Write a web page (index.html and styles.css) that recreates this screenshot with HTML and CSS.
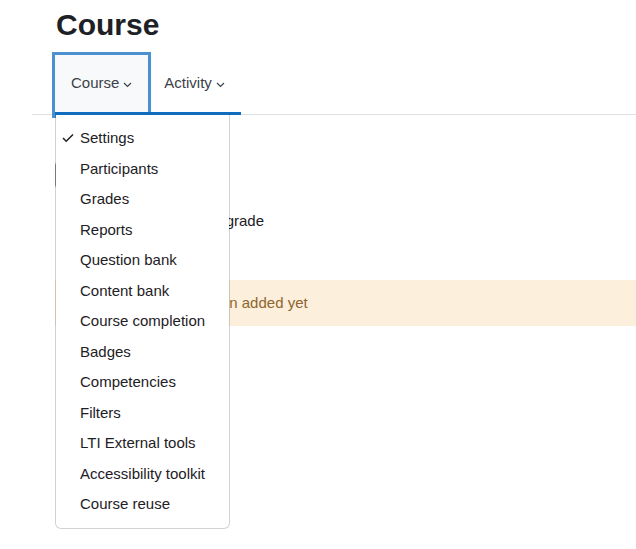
FILE: index.html
```html
<!DOCTYPE html>
<html lang="en">
<head>
<meta charset="utf-8">
<title>Course</title>
<link rel="stylesheet" href="styles.css">
</head>
<body>
<div class="page">
  <h2 class="page-title">Course</h2>
  <nav class="secnav">
    <ul class="tabs">
      <li class="tab tab-open">
        <a class="tab-link is-focused" href="#">Course<svg class="chev" width="9" height="6" viewBox="0 0 9 6"><polyline points="1,1 4.5,4.5 8,1" fill="none" stroke="currentColor" stroke-width="1.2"/></svg></a>
        <ul class="dropdown">
          <li class="dd-item"><span class="dd-icon"><svg width="12" height="10" viewBox="0 0 12 10"><polyline points="1,5 4.2,8.2 11,1.5" fill="none" stroke="#1d2125" stroke-width="1.5"/></svg></span>Settings</li>
          <li class="dd-item"><span class="dd-icon"></span>Participants</li>
          <li class="dd-item"><span class="dd-icon"></span>Grades</li>
          <li class="dd-item"><span class="dd-icon"></span>Reports</li>
          <li class="dd-item"><span class="dd-icon"></span>Question bank</li>
          <li class="dd-item"><span class="dd-icon"></span>Content bank</li>
          <li class="dd-item"><span class="dd-icon"></span>Course completion</li>
          <li class="dd-item"><span class="dd-icon"></span>Badges</li>
          <li class="dd-item"><span class="dd-icon"></span>Competencies</li>
          <li class="dd-item"><span class="dd-icon"></span>Filters</li>
          <li class="dd-item"><span class="dd-icon"></span>LTI External tools</li>
          <li class="dd-item"><span class="dd-icon"></span>Accessibility toolkit</li>
          <li class="dd-item"><span class="dd-icon"></span>Course reuse</li>
        </ul>
      </li>
      <li class="tab">
        <a class="tab-link" href="#">Activity<svg class="chev" width="9" height="6" viewBox="0 0 9 6"><polyline points="1,1 4.5,4.5 8,1" fill="none" stroke="currentColor" stroke-width="1.2"/></svg></a>
      </li>
    </ul>
  </nav>
  <section class="content">
    <div class="select-box">Grader report</div>
    <div class="grade-row"><span class="grade-text">Overall course grade</span></div>
    <div class="alert">No outcomes have been added yet</div>
  </section>
</div>
</body>
</html>
```

FILE: styles.css
```css
* { box-sizing: border-box; }
html, body { margin: 0; padding: 0; background: #fff; }
body {
  font-family: "Liberation Sans", Arial, sans-serif;
  color: #1d2125;
  font-size: 15px;
  line-height: 1.5;
}
.page {
  padding-left: 32px;
  min-height: 549px;
}
.page-title {
  margin: 7px 0 0 24px;
  font-size: 30px;
  line-height: 36px;
  font-weight: 700;
  color: #1d2125;
}
.secnav {
  margin-top: 12px;
  border-bottom: 1px solid #dee2e6;
  height: 60px;
}
.tabs {
  list-style: none;
  margin: 0 0 0 23px;
  padding: 0;
  display: flex;
  height: 60px;
}
.tab { position: relative; height: 60px; }
.tab-link {
  display: flex;
  align-items: center;
  height: 60px;
  padding: 0 16px;
  color: #3b4148;
  text-decoration: none;
  font-size: 15px;
  border-bottom: 3px solid #0f6cbf;
}
.is-focused {
  background: #f8f9fa;
  box-shadow: 0 0 0 3px rgba(15, 108, 191, 0.75);
  position: relative;
  z-index: 1;
}
.chev { margin-left: 4px; margin-top: 2px; }
.dropdown {
  position: absolute;
  top: 60px;
  left: 0;
  z-index: 5;
  width: 175px;
  margin: 0;
  padding: 8px 0 8px;
  list-style: none;
  background: #fff;
  background-clip: padding-box;
  border: 1px solid rgba(0, 0, 0, 0.175);
  border-top: 0;
  border-radius: 0 0 6px 6px;
}
.dd-item {
  display: flex;
  align-items: center;
  padding: 4px 10px 4px 6px;
  line-height: 22.5px;
  font-size: 15px;
  color: #1d2125;
  white-space: nowrap;
}
.dd-icon {
  width: 18px;
  flex: none;
  display: flex;
  align-items: center;
}
.content { padding-left: 23px; }
.select-box {
  margin-top: 46px;
  width: 160px;
  height: 28px;
  border: 1px solid #8f959e;
  border-radius: 4px;
  font-size: 15px;
  line-height: 26px;
  padding-left: 10px;
}
.grade-row {
  margin-top: 21px;
  width: 209px;
  text-align: right;
  white-space: nowrap;
  line-height: 22.5px;
}
.alert {
  margin: 47px 0 0 0;
  padding: 12px 20px 12px 20px;
  background: #fcefdc;
  color: #8e662e;
  line-height: 22.5px;
  font-size: 15px;
  white-space: nowrap;
}
```
